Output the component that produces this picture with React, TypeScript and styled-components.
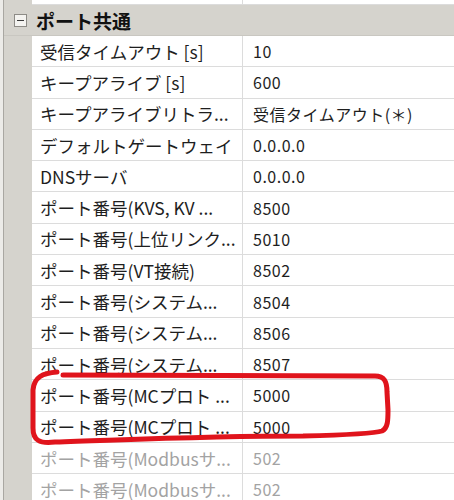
import React from "react";
import styled, { createGlobalStyle } from "styled-components";

const GlobalStyle = createGlobalStyle`
  html, body {
    margin: 0;
    padding: 0;
    background: #ffffff;
  }
  body {
    font-family: "Noto Sans CJK JP", "Noto Sans", sans-serif;
    overflow: hidden;
  }
`;

const Frame = styled.div`
  position: relative;
  width: 454px;
  height: 500px;
  overflow: hidden;
  background: #d5d3cd;
  border-left: 3px solid #ecebe8;
  box-sizing: border-box;
`;

const Grid = styled.div`
  display: flex;
  flex-direction: column;
  border-left: 1px solid #a9a7a2;
  height: 100%;
`;

const Row = styled.div<{ $height?: number }>`
  display: grid;
  grid-template-columns: 28px 211px 1fr;
  height: ${(p) => p.$height ?? 31.3}px;
  flex-shrink: 0;
`;

const Gutter = styled.div`
  background: #d5d3cd;
`;

const Cell = styled.div<{ $value?: boolean; $disabled?: boolean }>`
  display: flex;
  align-items: center;
  background: #ffffff;
  border-bottom: 1px solid #dcdcdc;
  border-right: ${(p) => (p.$value ? "none" : "1px solid #dcdcdc")};
  padding-left: ${(p) => (p.$value ? 10 : 8)}px;
  font-size: ${(p) => (p.$value ? 16 : 17.5)}px;
  color: ${(p) => (p.$disabled ? "#a3a3a3" : "#1e1e1e")};
  white-space: nowrap;
  overflow: hidden;
  box-sizing: border-box;
  letter-spacing: ${(p) => (p.$value ? "0.5px" : "0")};
`;

const Category = styled.div`
  display: flex;
  align-items: center;
  gap: 9px;
  height: 31px;
  flex-shrink: 0;
  padding-left: 10px;
  background: #d5d3cd;
  border-bottom: 1px solid #c9c7c1;
  box-sizing: border-box;
`;

const Toggle = styled.span`
  display: flex;
  align-items: center;
  justify-content: center;
  width: 11px;
  height: 11px;
  border: 1px solid #8d8b86;
  background: #f4f3f0;

  &::after {
    content: "";
    width: 7px;
    height: 1px;
    background: #3a3a3a;
  }
`;

const CategoryTitle = styled.span`
  font-size: 19px;
  font-weight: 700;
  color: #111111;
`;

const Marker = styled.svg`
  position: absolute;
  left: 0;
  top: 0;
  pointer-events: none;
`;

type Prop = { label: string; value: string; disabled?: boolean };

const props: Prop[] = [
  { label: "受信タイムアウト [s]", value: "10" },
  { label: "キープアライブ [s]", value: "600" },
  { label: "キープアライブリトラ...", value: "受信タイムアウト(＊)" },
  { label: "デフォルトゲートウェイ", value: "0.0.0.0" },
  { label: "DNSサーバ", value: "0.0.0.0" },
  { label: "ポート番号(KVS, KV ...", value: "8500" },
  { label: "ポート番号(上位リンク...", value: "5010" },
  { label: "ポート番号(VT接続)", value: "8502" },
  { label: "ポート番号(システム...", value: "8504" },
  { label: "ポート番号(システム...", value: "8506" },
  { label: "ポート番号(システム...", value: "8507" },
  { label: "ポート番号(MCプロト ...", value: "5000" },
  { label: "ポート番号(MCプロト ...", value: "5000" },
  { label: "ポート番号(Modbusサ...", value: "502", disabled: true },
  { label: "ポート番号(Modbusサ...", value: "502", disabled: true },
];

function App() {
  return (
    <>
      <GlobalStyle />
      <Frame>
        <Grid>
          <Row $height={5}>
            <Gutter />
            <Cell />
            <Cell $value />
          </Row>
          <Category>
            <Toggle />
            <CategoryTitle>ポート共通</CategoryTitle>
          </Category>
          {props.map((p, i) => (
            <Row key={i}>
              <Gutter />
              <Cell $disabled={p.disabled}>{p.label}</Cell>
              <Cell $value $disabled={p.disabled}>
                {p.value}
              </Cell>
            </Row>
          ))}
        </Grid>
        <Marker width="454" height="500" viewBox="0 0 454 500">
          <path
            d="M 54 372 C 40 373, 31 377, 30 390 L 30 428 C 30 440, 36 444, 52 442 C 120 440, 200 436, 300 436 C 340 435, 370 434, 379 431 C 385 428, 385 420, 385 410 L 384 392 C 384 381, 381 376, 372 376 L 60 375"
            fill="none"
            stroke="#e0141c"
            strokeWidth="5"
            strokeLinecap="round"
            strokeLinejoin="round"
          />
        </Marker>
      </Frame>
    </>
  );
}

export default App;
